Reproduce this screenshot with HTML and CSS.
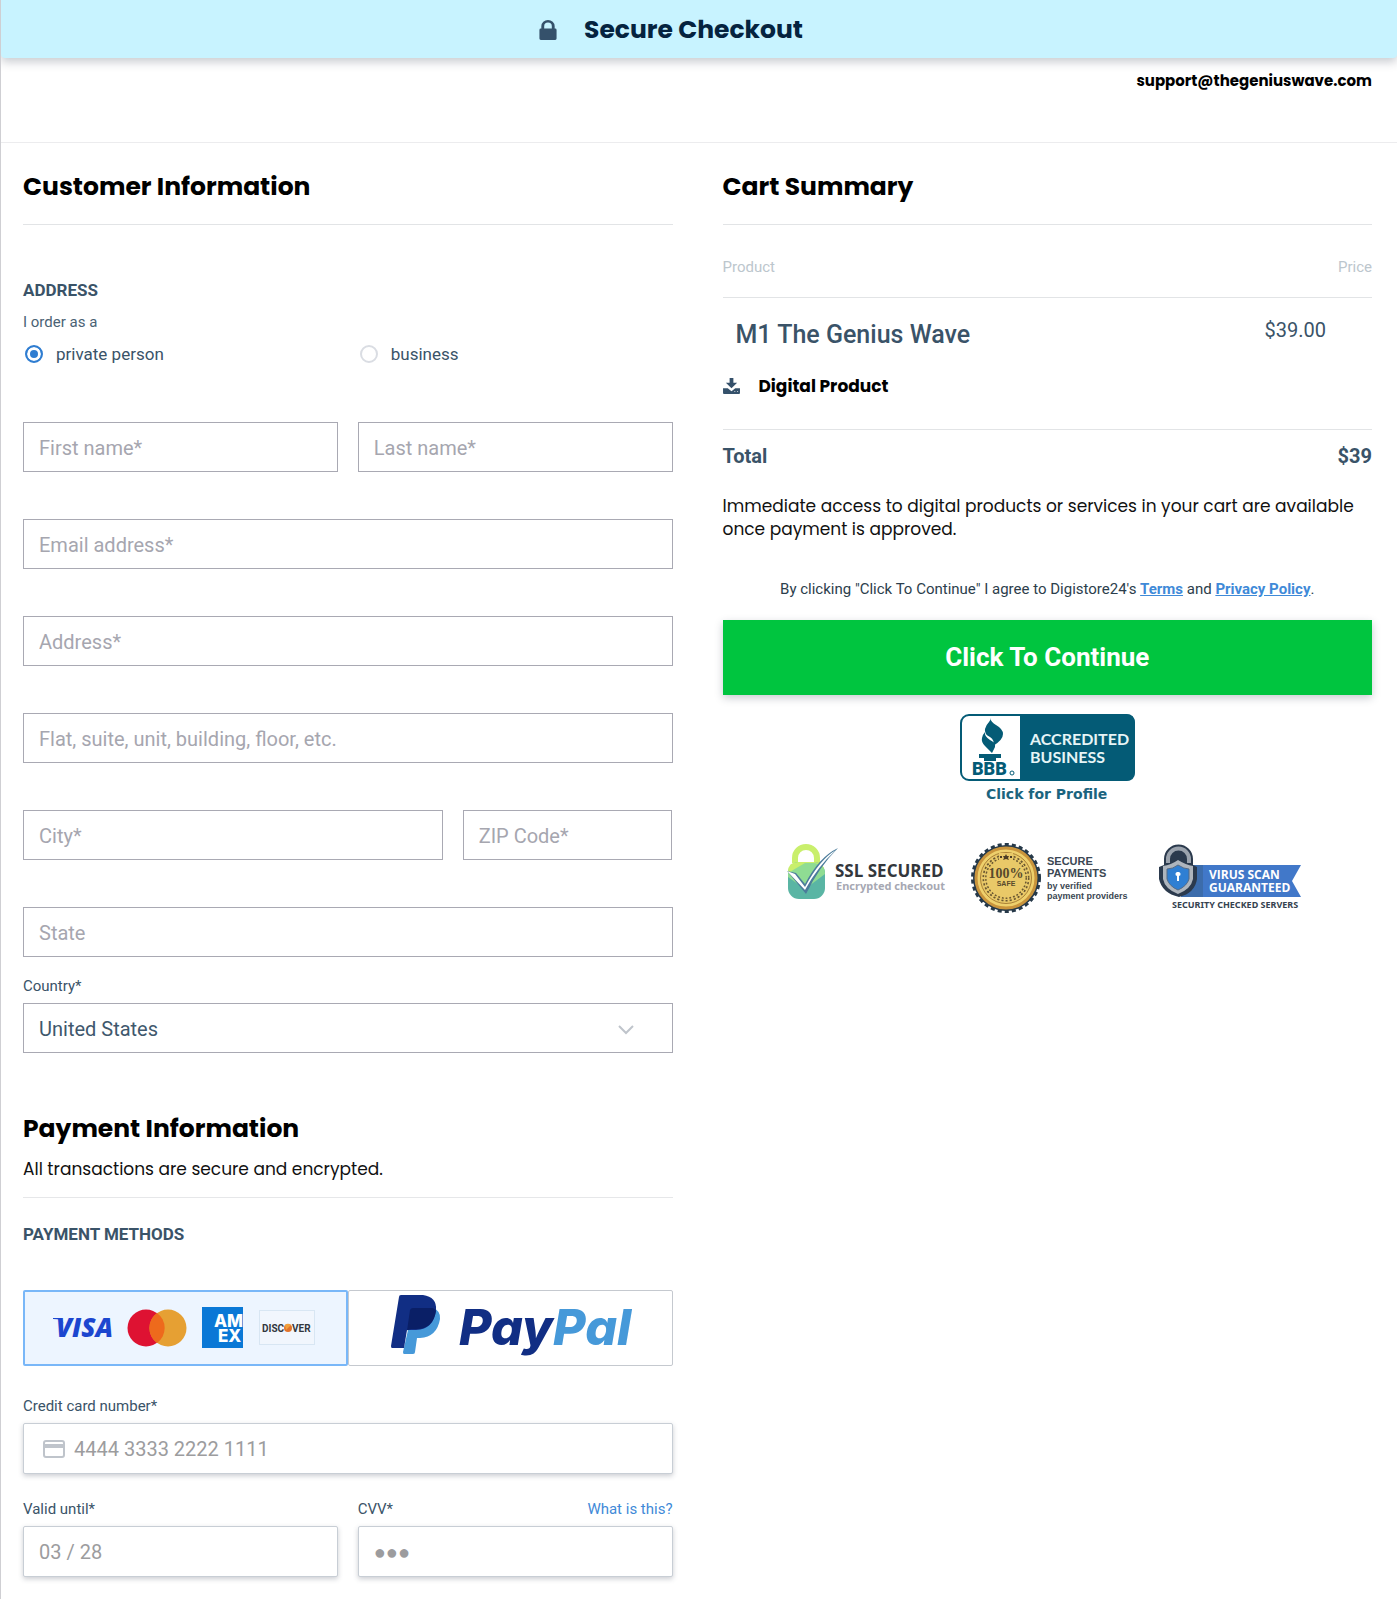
FILE: index.html
```html
<!DOCTYPE html>
<html lang="en">
    <head>
        <meta charset="utf-8">
        <title>Secure Checkout</title>
        <meta name="viewport" content="width=device-width, initial-scale=1.0">
        <link rel="stylesheet" href="styles.css">
    </head>

    <body>
        <header class="secure-bar">
            <svg class="lock" viewBox="0 0 18 21" aria-hidden="true">
                <path d="M2 9V6.500a7 6.500 0 0 1 14 0V9h.5A1.500 1.500 0 0 1 18 10.500v9a1.500 1.500 0 0 1-1.500 1.500h-15A1.500 1.500 0 0 1 0 19.500v-9A1.500 1.500 0 0 1 1.500 9zM5 9h8V6.500a4 3.800 0 0 0-8 0z"/>
            </svg>
            <h1>Secure Checkout</h1>
        </header>
        <div class="support"><a href="mailto:support@thegeniuswave.com">support@thegeniuswave.com</a></div>

        <form class="checkout">
            <!-- left column -->
            <div class="col">
                <h2 class="title">Customer Information</h2>

                <h3 class="address-title">ADDRESS</h3>
                <p class="order-as">I order as a</p>
                <div class="row person">
                    <label><input type="radio" name="person" checked> private person</label>
                    <label><input type="radio" name="person"> business</label>
                </div>

                <div class="fields">
                    <div class="row">
                        <input type="text" placeholder="First name*" aria-label="First name">
                        <input type="text" placeholder="Last name*" aria-label="Last name">
                    </div>
                    <input type="email" placeholder="Email address*" aria-label="Email address">
                    <input type="text" placeholder="Address*" aria-label="Address">
                    <input type="text" placeholder="Flat, suite, unit, building, floor, etc." aria-label="Address line 2">
                    <div class="row city">
                        <input type="text" placeholder="City*" aria-label="City">
                        <input type="text" placeholder="ZIP Code*" aria-label="ZIP Code">
                    </div>
                    <input type="text" placeholder="State" aria-label="State">
                </div>

                <div class="country">
                    <label for="country">Country*</label>
                    <div class="holder">
                        <select id="country"><option>United States</option></select>
                        <svg class="chevron" viewBox="0 0 16 10" aria-hidden="true"><path d="M1 1l7 7 7-7"/></svg>
                    </div>
                </div>

                <div class="payment-head">
                    <h2>Payment Information</h2>
                    <p>All transactions are secure and encrypted.</p>
                </div>

                <h3 class="methods-title">PAYMENT METHODS</h3>
                <div class="methods">
                    <label class="method">
                        <input type="radio" name="method" aria-label="Credit card" checked>
                        <svg width="264" height="44" viewBox="0 0 264 44">
                            <text class="visa" x="3" y="31">VISA</text>
                            <path fill="#1c46cf" d="M0 12h8l3 6-3-4q-3-1-8-1z"/>
                            <circle cx="93" cy="22" r="18.500" fill="#de1232"/>
                            <circle cx="115" cy="22" r="18.500" fill="#e6a033"/>
                            <path fill="#ee6a1c" d="M104 7a18.500 18.500 0 0 1 0 30a18.500 18.500 0 0 1 0-30z"/>
                            <path fill="#0a78d6" d="M149 1h41v41h-41z"/>
                            <svg x="149" y="1" width="41" height="41">
                                <text class="amex" x="12" y="20">AM</text>
                                <text class="amex" x="16" y="35">EX</text>
                            </svg>
                            <rect x="206.500" y="4.500" width="55" height="34" fill="#f1f6fd" stroke="#d8e6f3"/>
                            <text class="discover" x="209" y="26">DISC</text>
                            <circle cx="235" cy="22" r="4" fill="#e2732b"/>
                            <path fill="#f2a03c" d="M232 19a4 4 0 0 1 6 0l-5 5z"/>
                            <text class="discover" x="239" y="26">VER</text>
                        </svg>
                    </label>
                    <label class="method">
                        <input type="radio" name="method" aria-label="PayPal">
                        <svg width="250" height="66" viewBox="-6 4 250 66">
                            <path fill="#4699d9" d="M22 17h20q8 3 7 11-3 18-20 19h-3l-2 14q0 2-2 2H13q-1 0-1-2z"/>
                            <path fill="#112e84" d="M10 4h22q14 2 13 15-2 19-20 20h-9l-3 18H1q-1 0-1-2L8 6q0-2 2-2z"/>
                            <path fill="#0a1f66" d="M22 17h20q2 1 3 3-3 18-20 18h-5l-3 1q-1 0-1 1l3-21q1-2 3-2z"/>
                            <text class="paypal" x="68" y="54">Pay<tspan fill="#4699d9">Pal</tspan></text>
                        </svg>
                    </label>
                </div>

                <div class="card-field">
                    <label for="card">Credit card number*</label>
                    <div class="holder">
                        <svg class="card-icon" viewBox="0 0 22 18" aria-hidden="true"><rect x="1" y="1" width="20" height="16" rx="2"/><path d="M1 6h20"/></svg>
                        <input id="card" class="with-icon" type="text" placeholder="4444 3333 2222 1111">
                    </div>
                </div>
                <div class="row">
                    <div class="card-field">
                        <label for="valid">Valid until*</label>
                        <input id="valid" type="text" placeholder="03 / 28">
                    </div>
                    <div class="card-field">
                        <div class="cvv-label"><label for="cvv">CVV*</label><a href="#">What is this?</a></div>
                        <input id="cvv" type="text" placeholder="●●●">
                    </div>
                </div>
            </div>

            <!-- right column -->
            <div class="col">
                <h2 class="title">Cart Summary</h2>
                <table class="cart">
                    <thead>
                        <tr><th>Product</th><th>Price</th></tr>
                    </thead>
                    <tbody>
                        <tr class="item"><td>M1 The Genius Wave</td><td>$39.00</td></tr>
                        <tr class="digital">
                            <td colspan="2">
                                <div>
                                    <svg viewBox="0 0 18 17" aria-hidden="true"><path d="M7 0h4v5h4L9 11 3 5h4zM0 11h5l4 3 4-3h5v5q0 1-1 1H1q-1 0-1-1z"/><path fill="#fff" d="M12 14h1v1h-1zM15 14h1v1h-1z"/></svg>
                                    Digital Product
                                </div>
                            </td>
                        </tr>
                    </tbody>
                    <tfoot>
                        <tr><td>Total</td><td>$39</td></tr>
                    </tfoot>
                </table>
                <p class="access">Immediate access to digital products or services in your cart are available once payment is approved.</p>
                <p class="agree">By clicking "Click To Continue" I agree to Digistore24's <a href="#">Terms</a> and <a href="#">Privacy Policy</a>.</p>
                <button class="continue" type="submit">Click To Continue</button>

                <a class="bbb" href="#">
                    <svg width="175" height="88" viewBox="0 0 175 88">
                        <rect x="1" y="1" width="173" height="65" rx="8" fill="#fff" stroke="#045b76" stroke-width="2"/>
                        <path fill="#045b76" d="M60 0h106q9 0 9 9v49q0 9-9 9H60z"/>
                        <path fill="#045b76" d="M30 4q1 4 6 7 7 4 7 9 0 6-10 12 2-6-3-9-6-3-5-8 1-4 4-7 2-2 1-4zM25 18q-1 4 5 8 6 3 5 7l-3 6-7-7q-4-4-3-8 1-4 3-6zM19 40h22v4h-5v3h-12v-3h-5z"/>
                        <text class="bbb-name" x="12" y="61">BBB</text>
                        <circle cx="52" cy="59" r="2" fill="none" stroke="#045b76"/>
                        <text class="bbb-text" x="70" y="31">ACCREDITED</text>
                        <text class="bbb-text" x="70" y="49">BUSINESS</text>
                        <text class="bbb-click" x="26" y="85">Click for Profile</text>
                    </svg>
                </a>

                <div class="badges">
                    <svg width="160" height="72" viewBox="0 0 160 72">
                        <path fill="#c9ef6c" d="M5 20V15a14 14 0 0 1 28 0v5zM11 20h16v-5a8 8 0 0 0-16 0z" fill-rule="evenodd"/>
                        <rect x="1" y="19" width="37" height="37" rx="11" fill="#5ab5a4"/>
                        <path fill="#c9ef6c" d="M1 33V29q0-10 10-10h16q7 0 10 6L20 41z"/>
                        <path fill="#8fdc93" d="M1 30l17-10h9q11 1 11 11L18 46 1 34z"/>
                        <path fill="#4b7c9b" d="M0 28l9 2 9 11Q32 14 51 5 32 24 19 51z"/>
                        <path fill="#fff" d="M0 28l8 3 10 13Q33 16 49 7 31 23 18 47z"/>
                        <text class="ssl" x="48" y="34">SSL SECURED</text>
                        <text class="ssl-sub" x="49" y="47">Encrypted checkout</text>
                    </svg>
                    <svg width="164" height="72" viewBox="0 0 164 72">
                        <circle cx="35" cy="35" r="33" fill="#263949"/>
                        <circle cx="35" cy="35" r="33" fill="none" stroke="#263949" stroke-width="4" stroke-dasharray="4 3"/>
                        <circle cx="35" cy="35" r="30" fill="#eed06c" stroke="#c9943c" stroke-width="3"/>
                        <circle cx="35" cy="35" r="25.500" fill="#e9c968" stroke="#a98036"/>
                        <circle cx="35" cy="35" r="21.500" fill="none" stroke="#6a5731" stroke-width="4" stroke-dasharray="2 2"/>
                        <circle cx="35" cy="35" r="21.500" fill="none" stroke="#e9c968"/>
                        <path fill="#e9c968" d="M28 10h14v8H28z"/>
                        <path fill="#4b3d25" d="M35 11l1 2h2l-1 2 1 2-3-1-3 1 1-2-1-2h2zM29 13h2v2h-2zM39 13h2v2h-2z"/>
                        <path fill="#e9c968" d="M18 24h34v20H18z"/>
                        <text class="seal-num" x="35" y="35">100%</text>
                        <text class="seal-safe" x="35" y="43">SAFE</text>
                        <text class="secure" x="76" y="22">SECURE</text>
                        <text class="secure" x="76" y="34">PAYMENTS</text>
                        <text class="secure-sub" x="76" y="46">by verified</text>
                        <text class="secure-sub" x="76" y="56">payment providers</text>
                    </svg>
                    <svg width="148" height="72" viewBox="0 0 148 72">
                        <path fill="#4178c9" d="M22 22h120l-9 16 9 16H22z"/>
                        <path fill="#3c6cab" d="M30 22h14v32H22z"/>
                        <path fill="#2b3a4d" d="M5 22V16a14.500 14.500 0 0 1 29 0v6l4 2v12q-2 14-18 18Q3 50 0 36V24z"/>
                        <path fill="none" stroke="#9ba3ad" stroke-width="4" d="M9 20v-4a10.500 10.500 0 0 1 21 0v4"/>
                        <path fill="#aeb5bd" d="M19 17q8 5 15 6v13q-2 10-15 15Q6 46 4 36V23q8-1 15-6z"/>
                        <path fill="#2f7fd3" stroke="#536a86" d="M19 22q6 4 11 4v10q-2 7-11 11Q10 43 8 36V26q6 0 11-4z"/>
                        <path fill="#fff" d="M19 29a2 2 0 0 1 1 4v5h-2v-5a2 2 0 0 1 1-4z"/>
                        <text class="virus" x="50" y="36">VIRUS SCAN</text>
                        <text class="virus" x="50" y="49">GUARANTEED</text>
                        <text class="servers" x="13" y="65">SECURITY CHECKED SERVERS</text>
                    </svg>
                </div>
            </div>
        </form>
    </body>
</html>
```

FILE: styles.css
```css
* {
    box-sizing: border-box;
}
body {
    margin: 0;
    border-left: 1px solid #cfcfd3;
    background: #fff;
    color: #3a5368;
    font-family: Roboto, sans-serif;
    font-size: 15px;
    line-height: 20px;
}
h1, h2, h3, p {
    margin: 0;
}
a { color: #3f8ad8; text-decoration: none; }

.secure-bar {
    display: flex;
    align-items: center;
    justify-content: center;
    gap: 27px;
    height: 58px;
    padding: 2px 56px 0 0;
    background: #c8f3ff;
    border-radius: 0 0 4px 4px;
    box-shadow: 0 4px 10px rgba(40, 50, 70, .25);
}
.secure-bar h1 {
    color: #05233f;
    font: bold 25px/40px Poppins, Inter, sans-serif;
}
.lock {
    width: 18px;
    height: 20px;
    fill: #35516b;
}
.support {
    height: 85px;
    padding: 13px 25px 0;
    border-bottom: 1px solid #ececee;
    text-align: right;
}
.support a {
    color: #000;
    font: bold 15px/20px Poppins, Inter, sans-serif;
}

.checkout {
    display: grid;
    grid-template-columns: 1fr 1fr;
    gap: 50px;
    padding: 24px 25px 22px 22px;
}
h2 {
    color: #000;
    font: bold 25px/40px Poppins, Inter, sans-serif;
}
h3 {
    font-size: 17px;
    font-weight: bold;
    line-height: 24px;
}
.title {
    padding-bottom: 17px;
    border-bottom: 1px solid #e2e4e6;
}
.address-title { margin: 53px 0 10px; }
.order-as { color: #4a6274; }

.row {
    display: grid;
    grid-template-columns: 1fr 1fr;
    gap: 20px;
}
.city { grid-template-columns: 2fr 1fr; }
.person {
    margin: 10px 0 56px;
    font-size: 17px;
    line-height: 24px;
}
.person label {
    display: flex;
    align-items: center;
    gap: 13px;
}
.person input {
    appearance: none;
    width: 18px;
    height: 18px;
    margin: 0 0 0 2px;
    border: 2px solid #dadde3;
    border-radius: 50%;
}
.person input:checked {
    border-color: #2f7dd1;
    background: #2f7dd1;
    box-shadow: inset 0 0 0 3px #fff;
}

.fields {
    display: grid;
    gap: 47px;
}
input[type=text], input[type=email], select {
    display: block;
    width: 100%;
    min-width: 0;
    height: 50px;
    padding: 2px 15px 0;
    border: 1px solid #a9a9b3;
    border-radius: 0;
    background: #fff;
    color: #3f586d;
    font: 20px/24px Roboto, sans-serif;
}
input::placeholder { color: #a6a6af; opacity: 1; }
select { appearance: none; }
.country {
    display: grid;
    gap: 7px;
    margin: 19px 0 56px;
}
.holder { position: relative; }
.chevron {
    position: absolute;
    top: 22px;
    right: 39px;
    width: 16px;
    height: 10px;
    fill: none;
    stroke: #bfc4cb;
    stroke-width: 2;
}

.payment-head {
    padding-bottom: 16px;
    border-bottom: 1px solid #e6e7e9;
}
.payment-head p {
    margin-top: 8px;
    color: #111;
    font: 17px/24px Poppins, Inter, sans-serif;
}
.methods-title { margin: 24px 0 44px; }
.methods {
    display: grid;
    grid-template-columns: 1fr 1fr;
    margin-bottom: 30px;
}
.method {
    display: flex;
    align-items: center;
    justify-content: center;
    height: 76px;
    border: 1px solid #c5c9cf;
    border-radius: 2px;
}
.method:has(:checked) {
    border: 2px solid #79b7f8;
    background: #edf5ff;
}
.method input {
    position: absolute;
    opacity: 0;
}
.visa { font: italic 800 26px "Open Sans", sans-serif; fill: #1c46cf; }
.amex { font: 800 17px Inter, sans-serif; fill: #fff; }
.discover { font: bold 10px Roboto, sans-serif; fill: #33373d; }
.paypal { font: italic 800 50px Inter, sans-serif; fill: #112e84; }

.card-field {
    display: grid;
    gap: 7px;
    margin-bottom: 25px;
}
.row .card-field { margin: 0; }
.card-field input[type=text] {
    height: 51px;
    padding-top: 0;
    border-color: #c8ced5;
    border-radius: 2px;
    box-shadow: 0 2px 5px rgba(50, 60, 80, .25);
}
.card-field input::placeholder { color: #9c9c9e; }
.card-field .with-icon { padding-left: 50px; }
.card-icon {
    position: absolute;
    top: 17px;
    left: 20px;
    width: 22px;
    height: 18px;
    fill: none;
    stroke: #bfc4cb;
    stroke-width: 2;
}
.card-icon path { stroke-width: 4; }
.cvv-label {
    display: flex;
    justify-content: space-between;
}

.cart {
    width: 100%;
    border-collapse: collapse;
}
.cart th, .cart td {
    padding: 0;
    text-align: left;
}
.cart tr > :nth-child(2) { text-align: right; }
.cart th {
    padding: 32px 0 20px;
    border-bottom: 1px solid #e2e4e6;
    color: #bcc6cd;
    font-weight: 400;
}
.cart .item td {
    padding: 21px 13px 23px;
    font-size: 25px;
    font-weight: 500;
    line-height: 32px;
}
.cart .item td + td {
    padding: 20px 46px 24px 0;
    font-size: 20px;
    font-weight: 400;
    line-height: 24px;
    vertical-align: top;
}
.cart .digital td {
    padding-bottom: 31px;
    border-bottom: 1px solid #e2e4e6;
    color: #000;
    font: bold 17px/24px Poppins, Inter, sans-serif;
}
.digital div {
    display: flex;
    align-items: center;
    gap: 19px;
}
.digital svg {
    width: 17px;
    height: 16px;
    fill: #35516b;
}
.cart tfoot td {
    padding: 14px 0 0;
    font-size: 20px;
    font-weight: bold;
    line-height: 24px;
}
.access {
    margin: 27px 0 38px;
    color: #111;
    font: 17px/23px Poppins, Inter, sans-serif;
}
.agree {
    color: #2c3e4c;
    text-align: center;
}
.agree a {
    font-weight: bold;
    text-decoration: underline;
}
.continue {
    display: block;
    width: 100%;
    height: 75px;
    margin: 21px 0 19px;
    padding: 0 0 2px;
    border: 0;
    background: #00c53f;
    box-shadow: 0 3px 8px rgba(40, 50, 70, .25);
    color: #fff;
    font: bold 26px/32px Roboto, sans-serif;
}
.bbb {
    display: flex;
    justify-content: center;
    margin-bottom: 41px;
}
.bbb-name { font: 900 18px Roboto, sans-serif; fill: #045b76; }
.bbb-text { font: bold 16px Lato, sans-serif; fill: #e6f5f7; }
.bbb-click { font: bold 14px "DejaVu Sans", sans-serif; fill: #1b647e; }

.badges {
    display: flex;
    flex-wrap: wrap;
    justify-content: center;
    gap: 24px;
}
.ssl { font: bold 17px "Open Sans", sans-serif; fill: #33373c; }
.ssl-sub { font: bold 11px "Noto Sans", sans-serif; fill: #a6a8b3; }
.seal-num { font: bold 14px "Liberation Serif", serif; fill: #57492c; text-anchor: middle; }
.seal-safe { font: bold 7px "Liberation Sans", sans-serif; fill: #57492c; text-anchor: middle; }
.secure { font: bold 11px "Liberation Sans", sans-serif; fill: #3b4753; }
.secure-sub { font: bold 9px "Liberation Sans", sans-serif; fill: #3b4753; }
.virus { font: bold 12px "Open Sans", sans-serif; fill: #fff; }
.servers { font: bold 9px "Noto Sans", sans-serif; fill: #35424f; }
```
